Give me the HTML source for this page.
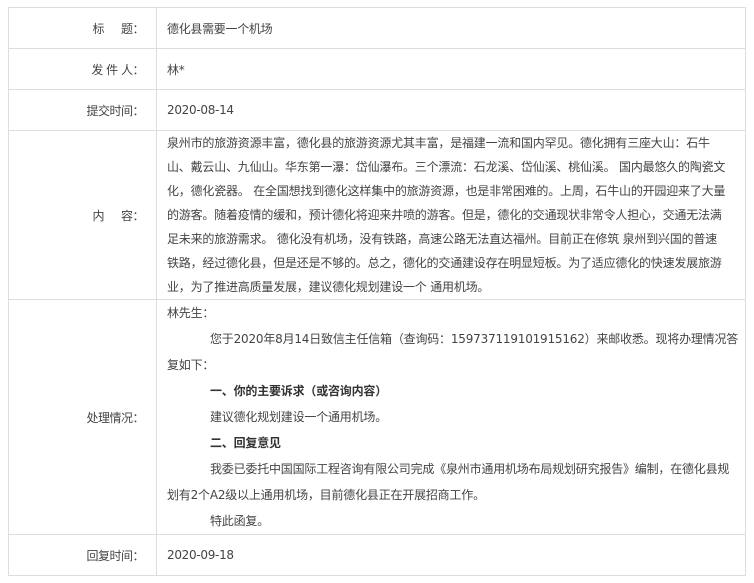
<!DOCTYPE html>
<html><head><meta charset="utf-8"><style>
body{margin:0;background:#fff;font-family:"DejaVu Sans","Noto Sans CJK SC",sans-serif;font-size:12px;color:#444;}
table{position:absolute;left:8px;top:7px;width:738px;border-collapse:collapse;}
td{border:1px solid #ddd;padding:0;vertical-align:middle;}
td.l{width:135px;text-align:right;padding-right:12px;letter-spacing:-0.5px;}
td.r{padding-left:10px;white-space:nowrap;letter-spacing:-0.3px;}
.c{line-height:24px;letter-spacing:-0.2px !important;}
.p{line-height:26px;letter-spacing:-0.2px !important;}
.i{padding-left:43px;}
b{font-weight:bold;color:#333;}
</style></head><body>
<table>
<tr style="height:41px"><td class="l">标&emsp;&ensp;题：</td><td class="r">德化县需要一个机场</td></tr>
<tr style="height:41px"><td class="l">发 件 人：</td><td class="r">林*</td></tr>
<tr style="height:41px"><td class="l">提交时间：</td><td class="r">2020-08-14</td></tr>
<tr style="height:169px"><td class="l">内&emsp;&ensp;容：</td><td class="r c">泉州市的旅游资源丰富，德化县的旅游资源尤其丰富，是福建一流和国内罕见。德化拥有三座大山：石牛<br>山、戴云山、九仙山。华东第一瀑：岱仙瀑布。三个漂流：石龙溪、岱仙溪、桃仙溪。 国内最悠久的陶瓷文<br>化，德化瓷器。 在全国想找到德化这样集中的旅游资源，也是非常困难的。上周，石牛山的开园迎来了大量<br>的游客。随着疫情的缓和，预计德化将迎来井喷的游客。但是，德化的交通现状非常令人担心，交通无法满<br>足未来的旅游需求。 德化没有机场，没有铁路，高速公路无法直达福州。目前正在修筑 泉州到兴国的普速<br>铁路，经过德化县，但是还是不够的。总之，德化的交通建设存在明显短板。为了适应德化的快速发展旅游<br>业，为了推进高质量发展，建议德化规划建设一个 通用机场。</td></tr>
<tr style="height:235px"><td class="l">处理情况：</td><td class="r p">林先生：<br><span class="i"></span>您于2020年8月14日致信主任信箱（查询码：159737119101915162）来邮收悉。现将办理情况答<br>复如下：<br><span class="i"></span><b>一、你的主要诉求（或咨询内容）</b><br><span class="i"></span>建议德化规划建设一个通用机场。<br><span class="i"></span><b>二、回复意见</b><br><span class="i"></span>我委已委托中国国际工程咨询有限公司完成《泉州市通用机场布局规划研究报告》编制，在德化县规<br>划有2个A2级以上通用机场，目前德化县正在开展招商工作。<br><span class="i"></span>特此函复。</td></tr>
<tr style="height:41px"><td class="l">回复时间：</td><td class="r">2020-09-18</td></tr>
</table>
</body></html>
